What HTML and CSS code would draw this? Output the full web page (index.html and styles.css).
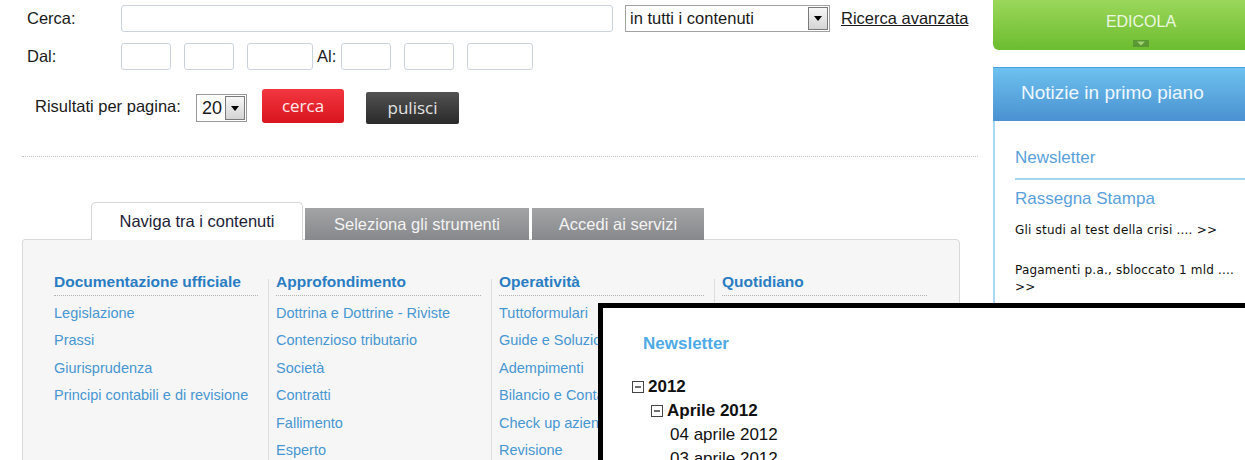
FILE: index.html
```html
<!DOCTYPE html>
<html lang="it">
<head>
<meta charset="utf-8">
<title>Ricerca</title>
<link rel="stylesheet" href="styles.css">
</head>
<body>
<div class="page">
  <main class="main">
    <form class="search">
      <div class="row row-search">
        <label class="lbl">Cerca:</label>
        <input class="field field-q" type="text">
        <div class="select select-scope">
          <span class="select-text">in tutti i contenuti</span>
          <span class="select-btn"><svg width="8" height="5" viewBox="0 0 8 5"><polygon points="0,0 8,0 4,5" fill="#000"/></svg></span>
        </div>
        <a class="adv" href="#">Ricerca avanzata</a>
      </div>
      <div class="row row-dates">
        <label class="lbl">Dal:</label>
        <input class="field f-d" type="text">
        <input class="field f-d" type="text">
        <input class="field f-y" type="text">
        <label class="lbl-al">Al:</label>
        <input class="field f-d" type="text">
        <input class="field f-d" type="text">
        <input class="field f-y" type="text">
      </div>
      <div class="row row-actions">
        <label class="lbl-res">Risultati per pagina:</label>
        <div class="select select-num">
          <span class="select-text num-text">20</span>
          <span class="select-btn"><svg width="8" height="5" viewBox="0 0 8 5"><polygon points="0,0 8,0 4,5" fill="#000"/></svg></span>
        </div>
        <button class="btn btn-red" type="button">cerca</button>
        <button class="btn btn-dark" type="button">pulisci</button>
      </div>
    </form>
    <hr class="divider">
    <div class="tabs">
      <div class="tab tab-active">Naviga tra i contenuti</div>
      <div class="tab tab-tools">Seleziona gli strumenti</div>
      <div class="tab tab-serv">Accedi ai servizi</div>
    </div>
    <div class="panel">
      <div class="col">
        <h3 class="col-h">Documentazione ufficiale</h3>
        <ul class="col-list">
          <li>Legislazione</li>
          <li>Prassi</li>
          <li>Giurisprudenza</li>
          <li>Principi contabili e di revisione</li>
        </ul>
      </div>
      <div class="col">
        <h3 class="col-h">Approfondimento</h3>
        <ul class="col-list">
          <li>Dottrina e Dottrine - Riviste</li>
          <li>Contenzioso tributario</li>
          <li>Società</li>
          <li>Contratti</li>
          <li>Fallimento</li>
          <li>Esperto</li>
        </ul>
      </div>
      <div class="col">
        <h3 class="col-h">Operatività</h3>
        <ul class="col-list">
          <li>Tuttoformulari</li>
          <li>Guide e Soluzioni</li>
          <li>Adempimenti</li>
          <li>Bilancio e Contabilità</li>
          <li>Check up aziendale</li>
          <li>Revisione</li>
        </ul>
      </div>
      <div class="col">
        <h3 class="col-h">Quotidiano</h3>
        <ul class="col-list">
          <li>Prima pagina</li>
          <li>Norme e tributi</li>
        </ul>
      </div>
    </div>
  </main>
  <aside class="side">
    <div class="edicola">
      <span class="edicola-text">EDICOLA</span>
      <svg class="edicola-arrow" width="16" height="7" viewBox="0 0 16 7"><rect x="0" y="0" width="16" height="7" fill="#5a9833"/><polygon points="4,1.5 12,1.5 8,5.5" fill="#a3d374"/></svg>
    </div>
    <div class="np-head">Notizie in primo piano</div>
    <div class="np-body">
      <div class="np-link np-first">Newsletter</div>
      <div class="np-link np-rassegna">Rassegna Stampa</div>
      <div class="np-item">Gli studi al test della crisi .... &gt;&gt;</div>
      <div class="np-item np-item2">Pagamenti p.a., sbloccato 1 mld ....<br>&gt;&gt;</div>
    </div>
  </aside>
</div>
<div class="overlay">
  <div class="ov-title">Newsletter</div>
  <ul class="tree">
    <li>
      <div class="node node-bold"><svg class="tog" width="12" height="12" viewBox="0 0 12 12"><rect x="0.5" y="0.5" width="11" height="11" fill="#fff" stroke="#444"/><line x1="3" y1="6" x2="9" y2="6" stroke="#111" stroke-width="1.2"/></svg>2012</div>
      <ul class="tree-sub">
        <li>
          <div class="node node-bold"><svg class="tog" width="12" height="12" viewBox="0 0 12 12"><rect x="0.5" y="0.5" width="11" height="11" fill="#fff" stroke="#444"/><line x1="3" y1="6" x2="9" y2="6" stroke="#111" stroke-width="1.2"/></svg>Aprile 2012</div>
          <ul class="tree-sub">
            <li class="leaf">04 aprile 2012</li>
            <li class="leaf">03 aprile 2012</li>
          </ul>
        </li>
      </ul>
    </li>
  </ul>
</div>
</body>
</html>
```
FILE: styles.css
```css
html, body {
  margin: 0;
  padding: 0;
  overflow: hidden;
  background: #fff;
}
body {
  font-family: "Liberation Sans", Arial, sans-serif;
  color: #1a1a1a;
  width: 1245px;
  height: 460px;
  position: relative;
}
.page {
  display: flex;
  width: 1289px;
}
.main {
  width: 993px;
  flex-shrink: 0;
}
.side {
  width: 296px;
  flex-shrink: 0;
}

/* search form */
.search {
  padding: 5px 0 0 27px;
}
.row {
  display: flex;
  align-items: center;
}
.lbl {
  width: 94px;
  font-size: 16.5px;
}
.field {
  box-sizing: border-box;
  height: 27px;
  border: 1px solid #cbd3dc;
  border-radius: 3px;
  background: #fff;
  margin: 0;
  padding: 0;
}
.field-q { width: 492px; }
.f-d { width: 50px; }
.f-y { width: 66px; }
.row-dates { margin-top: 11px; }
.row-dates .field + .field { margin-left: 13px; }
.lbl-al {
  font-size: 16.5px;
  margin: 0 5px 0 4px;
}
.select {
  box-sizing: border-box;
  display: flex;
  align-items: center;
  border: 1px solid #a2a2a2;
  background: #fff;
}
.select-scope {
  width: 205px;
  height: 27px;
  margin-left: 12px;
  padding: 0 1px 0 4px;
}
.select-text {
  flex: 1;
  font-size: 16.5px;
}
.select-btn {
  box-sizing: border-box;
  width: 20px;
  height: 23px;
  border: 1px solid #7a7a7a;
  background: linear-gradient(#f7f7f7, #d4d4d4);
  display: flex;
  align-items: center;
  justify-content: center;
}
.adv {
  margin-left: 11px;
  font-size: 16.5px;
  color: #1a1a1a;
  text-decoration: underline;
}
.row-actions {
  margin-top: 19px;
  padding-left: 8px;
  align-items: flex-start;
}
.lbl-res {
  width: 161px;
  font-size: 16.5px;
  line-height: 19px;
  margin-top: 8px;
}
.select-num {
  width: 51px;
  height: 28px;
  margin-top: 5px;
  padding: 0 1px 0 5px;
  border-color: #999;
}
.num-text { font-size: 18px; }
.select-num .select-btn { height: 24px; }
.btn {
  box-sizing: border-box;
  border: 0;
  padding: 0;
  font-family: "Open Sans", "Liberation Sans", sans-serif;
  font-size: 17px;
  cursor: pointer;
}
.btn-red {
  width: 82px;
  height: 34px;
  margin-left: 15px;
  border-radius: 3px;
  background: linear-gradient(#f2363f, #d9151f);
  color: #ffe9ea;
  padding-bottom: 2px;
}
.btn-dark {
  width: 93px;
  height: 32px;
  margin-left: 22px;
  margin-top: 3px;
  border-radius: 2px;
  background: linear-gradient(#525252, #2a2a2a);
  color: #e2e2e2;
  padding-bottom: 2px;
}
.divider {
  margin: 32px 15px 0 22px;
  border: 0;
  border-top: 1px dotted #c2c2c2;
  height: 0;
}

/* tabs */
.tabs {
  display: flex;
  align-items: flex-end;
  margin: 45px 0 -1px 91px;
  position: relative;
  z-index: 1;
}
.tab {
  box-sizing: border-box;
  height: 32px;
  display: flex;
  align-items: center;
  justify-content: center;
  font-size: 16.5px;
  color: #f3f3f3;
  background: linear-gradient(#a3a4a6, #87888b);
}
.tab-active {
  width: 212px;
  height: 38px;
  border: 1px solid #d6d6d6;
  border-bottom: 0;
  border-radius: 5px 5px 0 0;
  background: #fff;
  color: #1d1d38;
}
.tab-tools {
  width: 224px;
  margin-left: 2px;
}
.tab-serv {
  width: 172px;
  margin-left: 3px;
}

/* panel */
.panel {
  box-sizing: border-box;
  margin-left: 22px;
  width: 938px;
  height: 260px;
  background: #f6f6f6;
  border: 1px solid #d9d9d9;
  border-radius: 3px 4px 0 0;
  padding: 32px 0 0 31px;
  display: flex;
  align-items: flex-start;
}
.col {
  width: 205px;
  padding: 0 10px 0 7px;
  border-right: 1px solid #dedede;
  margin-top: 7px;
  min-height: 200px;
}
.col:first-child { padding-left: 0; width: 204px; }
.col:last-child { border-right: 0; }
.col-h {
  margin: -7px 0 0;
  font-size: 15.5px;
  font-weight: bold;
  color: #2a7dc3;
  line-height: 20px;
  padding-bottom: 3px;
  border-bottom: 1px dotted #b3b3b3;
}
.col-list {
  list-style: none;
  margin: 4px 0 0;
  padding: 0;
}
.col-list li {
  font-size: 14.5px;
  line-height: 27.4px;
  color: #4896d2;
  white-space: nowrap;
}

/* sidebar */
.edicola {
  height: 50px;
  box-sizing: border-box;
  padding-top: 12px;
  background: linear-gradient(#9bd75a, #6cbc2f);
  border-radius: 0 0 6px 6px;
  display: flex;
  flex-direction: column;
  align-items: center;
}
.edicola-text {
  font-size: 16px;
  line-height: 20px;
  color: #ecf7e0;
}
.edicola-arrow {
  display: block;
  margin-top: 8px;
}
.np-head {
  margin-top: 17px;
  height: 54px;
  box-sizing: border-box;
  border-top: 1px solid #4aa2e0;
  background: linear-gradient(#6dc1ef, #4a91d1);
  color: #eef7fd;
  font-size: 19px;
  padding: 0 0 4px 28px;
  display: flex;
  align-items: center;
}
.np-body {
  border-left: 2px solid #a8d8f3;
  padding: 26px 0 0 20px;
  height: 340px;
}
.np-link {
  font-size: 17px;
  line-height: 22px;
  color: #5a9fdb;
}
.np-first {
  padding-bottom: 9px;
  border-bottom: 2px solid #a4d6f2;
}
.np-rassegna { margin-top: 8px; }
.np-item {
  font-family: "DejaVu Sans", Verdana, sans-serif;
  font-size: 12px;
  letter-spacing: 0.2px;
  line-height: 17px;
  color: #111;
  margin-top: 12px;
}
.np-item2 { margin-top: 23px; }

/* overlay window */
.overlay {
  position: absolute;
  left: 598px;
  top: 303px;
  width: 700px;
  height: 220px;
  border: 5px solid #000;
  background: #fff;
  z-index: 5;
}
.ov-title {
  margin: 26px 0 0 40px;
  font-size: 17px;
  font-weight: bold;
  line-height: 20px;
  color: #4eaae6;
}
.tree {
  list-style: none;
  margin: 21px 0 0 29px;
  padding: 0;
  font-size: 17px;
  line-height: 24px;
  color: #111;
}
.tree-sub {
  list-style: none;
  margin: 0 0 0 19px;
  padding: 0;
}
.node {
  display: flex;
  align-items: center;
}
.node-bold { font-weight: bold; }
.tog {
  display: block;
  margin-right: 4px;
  flex-shrink: 0;
}
```
